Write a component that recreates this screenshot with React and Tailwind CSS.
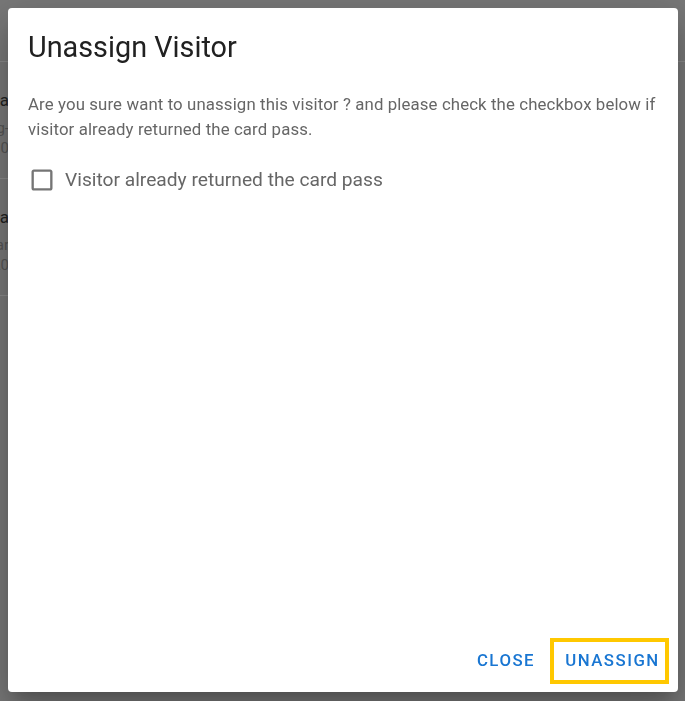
import React from "react";

const rows = [
  { title: "Visa", sub: "Tag-", meta: "10" },
  { title: "Visa", sub: "Car", meta: "20" },
];

function BackgroundPage() {
  return (
    <div className="min-h-[701px] bg-[#787878] font-['Roboto',sans-serif]">
      <div className="h-[62px] border-b border-[#8a8a8a]" />
      {rows.map((r, i) => (
        <div key={i} className="h-[117px] border-b border-[#8a8a8a] flex flex-col items-end w-[9px] overflow-hidden pt-[28px]">
          <div className="flex flex-col items-end">
            <span className="text-[17px] leading-[20px] text-[#222] whitespace-nowrap">{r.title}</span>
            <span className="text-[15px] leading-[20px] text-[#555] whitespace-nowrap mt-[8px]">{r.sub}</span>
            <span className="text-[15px] leading-[20px] text-[#555] whitespace-nowrap">{r.meta}</span>
          </div>
        </div>
      ))}
    </div>
  );
}

function CheckboxIcon() {
  return (
    <svg width="28" height="28" viewBox="0 0 24 24" className="shrink-0">
      <path
        fill="#757575"
        d="M19 3H5c-1.11 0-2 .89-2 2v14c0 1.1.89 2 2 2h14c1.1 0 2-.9 2-2V5c0-1.11-.9-2-2-2zm0 2v14H5V5h14z"
      />
    </svg>
  );
}

export default function App() {
  const [checked, setChecked] = React.useState(false);
  return (
    <div className="relative font-['Roboto',sans-serif]">
      <BackgroundPage />

      {/* Dialog */}
      <div className="fixed inset-0 pl-2 pr-[7px] pt-2 pb-[9px] flex">
        <div className="flex-1 bg-white rounded-[4px] shadow-[0_11px_15px_-7px_rgba(0,0,0,0.2),0_24px_38px_3px_rgba(0,0,0,0.14),0_9px_46px_8px_rgba(0,0,0,0.12)] flex flex-col">
          <h2 className="px-5 pt-[22px] pb-[28px] text-[28.8px] leading-[34px] text-[#212121]">
            Unassign Visitor
          </h2>
          <p className="pl-5 pr-[14px] text-[16.8px] leading-[25px] text-[#666] tracking-[0.12px]">
            Are you sure want to unassign this visitor ? and please check the checkbox below if visitor already returned the card pass.
          </p>
          <label
            className="mx-5 mt-[24px] flex items-center gap-[9px] cursor-pointer w-fit"
            onClick={() => setChecked(!checked)}
          >
            <CheckboxIcon />
            <span className="text-[19.2px] leading-[28px] text-[#666]">Visitor already returned the card pass</span>
          </label>

          <div className="mt-auto flex justify-end items-center gap-[4px] pr-[9px] pb-[8px]">
            <button className="w-[80px] h-[46px] flex items-center justify-center text-[16.8px] font-medium tracking-[1.5px] text-[#1976d2]">
              CLOSE
            </button>
            <button className="w-[119px] h-[46px] pl-[6px] flex items-center justify-center text-[16.8px] font-medium tracking-[1.5px] text-[#1976d2] border-[4px] border-[#ffc800]">
              UNASSIGN
            </button>
          </div>
        </div>
      </div>
    </div>
  );
}
